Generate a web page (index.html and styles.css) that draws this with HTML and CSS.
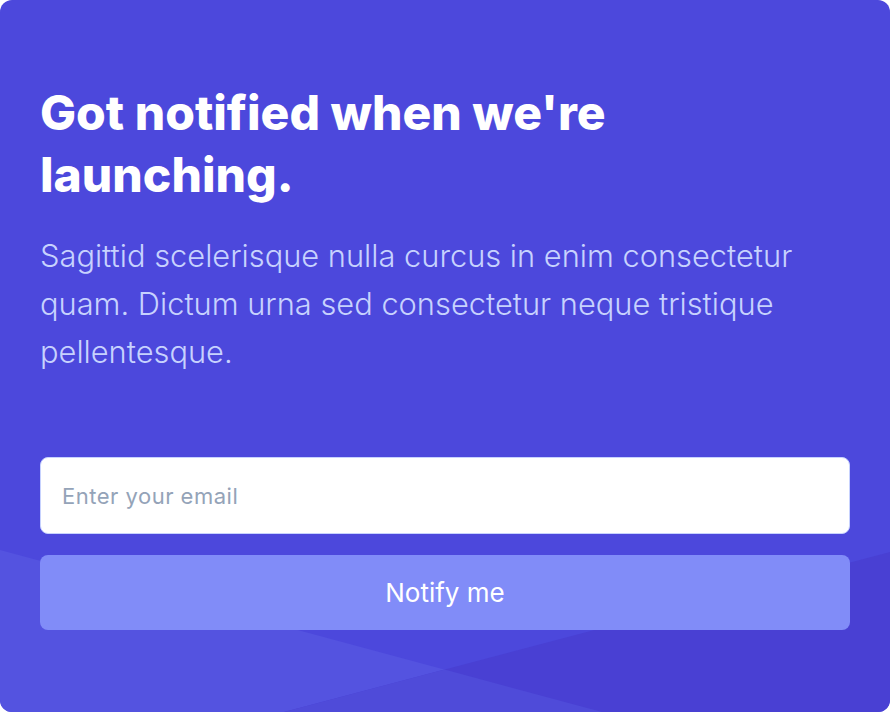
FILE: index.html
```html
<!DOCTYPE html>
<html lang="en">
<head>
<meta charset="utf-8">
<title>Notify</title>
<link rel="stylesheet" href="styles.css">
</head>
<body>
<section class="card">
  <svg class="decor" viewBox="0 0 890 712" preserveAspectRatio="none" aria-hidden="true">
    <polygon points="0,550 602,712 0,712" fill="#5453e0"/>
    <polygon points="890,552 284,712 890,712" fill="#4940d3"/>
    <polygon points="444.5,669.6 602,712 284,712" fill="#4f4bd9"/>
  </svg>
  <div class="content">
    <h1 class="title">Got notified when we're launching.</h1>
    <p class="lead">Sagittid scelerisque nulla curcus in enim consectetur quam. Dictum urna sed consectetur neque tristique pellentesque.</p>
    <form class="form" onsubmit="return false">
      <input class="email" type="email" placeholder="Enter your email">
      <button class="notify" type="submit">Notify me</button>
    </form>
  </div>
</section>
</body>
</html>
```
FILE: styles.css
```css
* { box-sizing: border-box; }
html, body { margin: 0; padding: 0; background: #ffffff; }
body { font-family: Inter, "Noto Sans", sans-serif; }

.card {
  position: relative;
  width: 890px;
  height: 712px;
  background: #4c48dc;
  border-radius: 12px;
  overflow: hidden;
}

.decor {
  position: absolute;
  left: 0;
  top: 0;
  width: 100%;
  height: 100%;
  z-index: 0;
}

.content {
  position: relative;
  z-index: 1;
  padding: 82px 40px 0 40px;
}

.title {
  margin: 0;
  width: 640px;
  font-size: 48px;
  line-height: 62px;
  font-weight: 800;
  color: #ffffff;
  letter-spacing: 0;
}

.lead {
  margin: 26px 0 0 0;
  font-size: 30.8px;
  line-height: 48px;
  font-weight: 300;
  color: #c7d2fe;
}

.form {
  margin-top: 81px;
  display: flex;
  flex-direction: column;
  gap: 21px;
}

.email {
  display: block;
  width: 100%;
  height: 77px;
  padding: 0 21px;
  border: 1.5px solid #c7d2fe;
  border-radius: 8px;
  background: #ffffff;
  font-family: Inter, "Noto Sans", sans-serif;
  font-size: 22px;
  letter-spacing: 0.5px;
  color: #1e293b;
  outline: none;
}
.email::placeholder { color: #94a3b8; }

.notify {
  display: block;
  width: 100%;
  height: 75px;
  border: 0;
  border-radius: 8px;
  background: #818cf8;
  color: #ffffff;
  font-family: Inter, "Noto Sans", sans-serif;
  font-size: 26px;
  font-weight: 400;
  cursor: pointer;
}
```
